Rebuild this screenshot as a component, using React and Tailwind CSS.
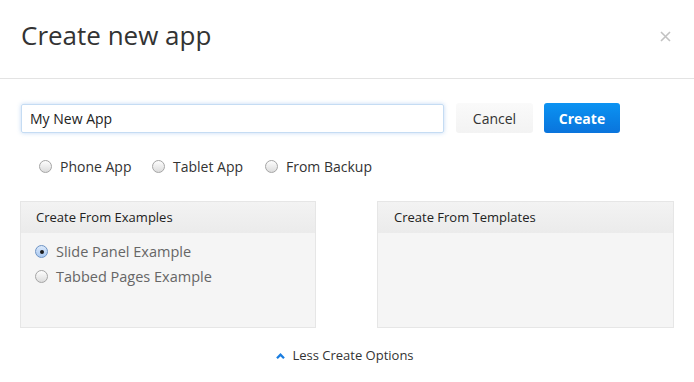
import { useState } from "react";

const Radio = ({ checked }) => (
  <span
    className={`inline-flex items-center justify-center w-[13px] h-[13px] rounded-full border shrink-0 ${
      checked
        ? "border-[#6d93c4] bg-gradient-to-b from-[#dbe9fb] to-[#a9c8f0]"
        : "border-[#a5a5a5] bg-gradient-to-b from-[#fdfdfd] to-[#dcdcdc]"
    }`}
  >
    {checked && <span className="w-[4px] h-[4px] rounded-full bg-[#1b1b1b]" />}
  </span>
);

const App = () => {
  const [name, setName] = useState("My New App");
  const [type, setType] = useState("");
  const [example, setExample] = useState("slide");

  return (
    <div className="w-[694px] h-[382px] bg-white font-['Open_Sans',sans-serif] text-[#333]">
      {/* Header */}
      <div className="h-[79px] border-b border-[#e3e3e3] flex items-start justify-between pl-[21px] pr-[23px] pt-[17px]">
        <h1 className="text-[26px] leading-[36px] text-[#333]">Create new app</h1>
        <button className="mt-[14px]">
          <svg width="11" height="11" viewBox="0 0 11 11">
            <path d="M1 1L10 10M10 1L1 10" stroke="#c2c2c2" strokeWidth="1.6" />
          </svg>
        </button>
      </div>

      {/* Name + actions */}
      <div className="flex items-center pl-[21px] pt-[24px]">
        <input
          value={name}
          onChange={(e) => setName(e.target.value)}
          className="w-[423px] h-[29px] pl-[8px] pr-[10px] text-[14px] text-[#222] border border-[#c5dcf3] rounded-[2px] shadow-[0_0_4px_rgba(120,170,230,0.45)] outline-none"
        />
        <button className="ml-[12px] w-[77px] h-[30px] rounded-[3px] bg-gradient-to-b from-[#fafafa] to-[#f3f3f3] text-[14px] text-[#333]">
          Cancel
        </button>
        <button className="ml-[11px] w-[76px] h-[30px] rounded-[3px] bg-gradient-to-b from-[#0c93f2] to-[#0a74dc] text-[14px] font-bold text-white">
          Create
        </button>
      </div>

      {/* App type */}
      <div className="flex items-start pl-[39px] pt-[24px] text-[14px] text-[#333] h-[68px]">
        {[
          ["phone", "Phone App"],
          ["tablet", "Tablet App"],
          ["backup", "From Backup"],
        ].map(([key, label]) => (
          <label
            key={key}
            onClick={() => setType(key)}
            className="flex items-center gap-[8px] w-[113px] h-[19px] cursor-pointer"
          >
            <Radio checked={type === key} />
            <span className="whitespace-nowrap">{label}</span>
          </label>
        ))}
      </div>

      {/* Panels */}
      <div className="flex pl-[20px] gap-[61px]">
        <div className="w-[296px] h-[127px] border border-[#e6e6e6] bg-[#f5f5f5]">
          <div className="h-[31px] bg-gradient-to-b from-[#f3f3f3] to-[#ebebeb] pl-[15px] flex items-center text-[13px] text-[#222]">
            Create From Examples
          </div>
          <div className="pl-[14px] pt-[9px] flex flex-col gap-[6px] text-[14.5px] text-[#666]">
            {[
              ["slide", "Slide Panel Example"],
              ["tabbed", "Tabbed Pages Example"],
            ].map(([key, label]) => (
              <label
                key={key}
                onClick={() => setExample(key)}
                className="flex items-center gap-[8px] h-[19px] cursor-pointer"
              >
                <Radio checked={example === key} />
                <span>{label}</span>
              </label>
            ))}
          </div>
        </div>
        <div className="w-[297px] h-[127px] border border-[#e6e6e6] bg-[#f5f5f5]">
          <div className="h-[31px] bg-gradient-to-b from-[#f3f3f3] to-[#ebebeb] pl-[16px] flex items-center text-[13px] text-[#222]">
            Create From Templates
          </div>
        </div>
      </div>

      {/* Toggle */}
      <div className="flex justify-center pt-[18px] pr-[4px]">
        <button className="flex items-center gap-[7px] text-[13px] text-[#333]">
          <svg width="9" height="6" viewBox="0 0 9 6">
            <path d="M1 5.2L4.5 1.7L8 5.2" fill="none" stroke="#1a7de0" strokeWidth="2.3" />
          </svg>
          Less Create Options
        </button>
      </div>
    </div>
  );
};

export default App;
